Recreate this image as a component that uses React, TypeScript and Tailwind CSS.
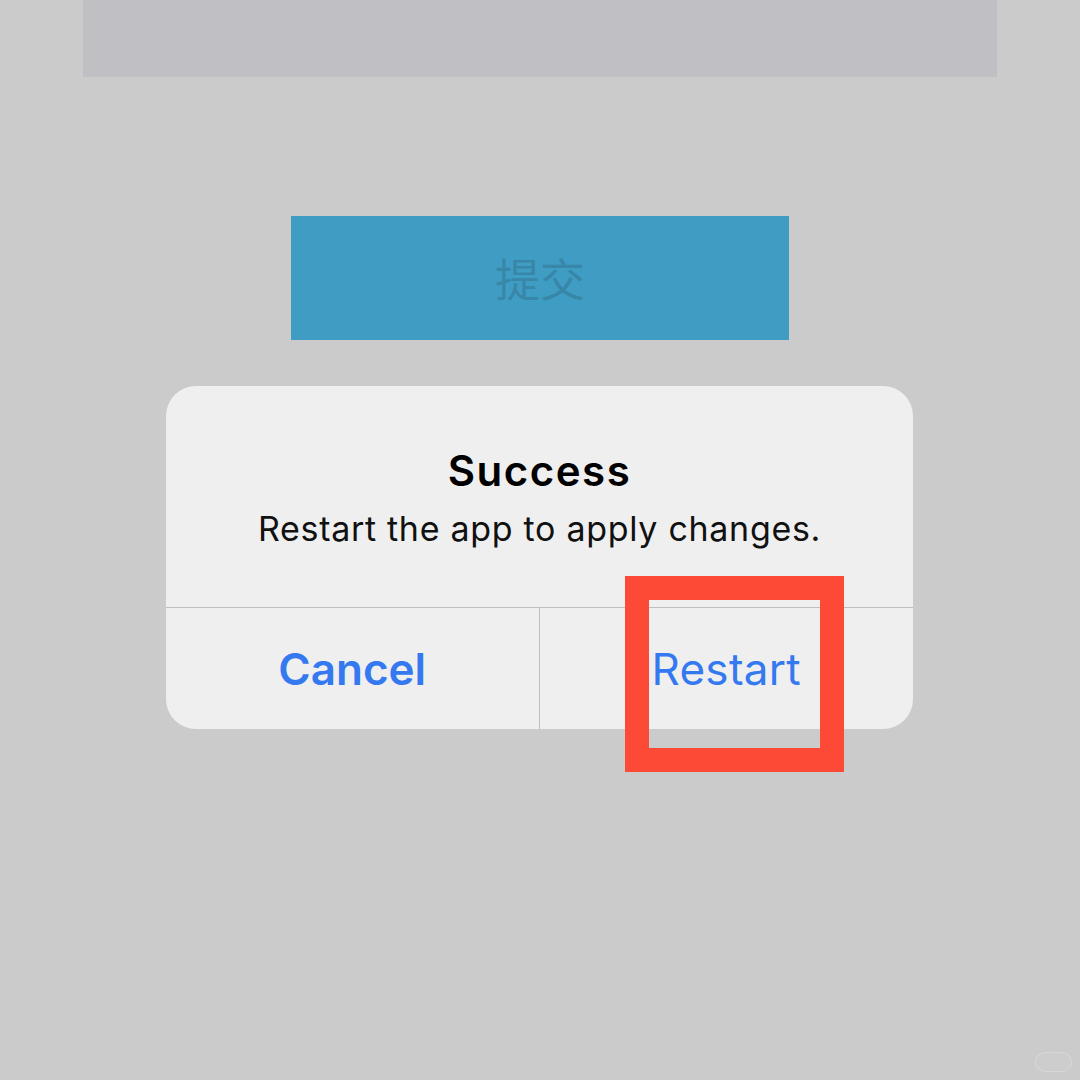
export default function App() {
  return (
    <div className="w-[1080px] h-[1080px] bg-[#cbcbcb] flex flex-col font-['Inter','Noto_Sans_CJK_SC',sans-serif] overflow-hidden relative">
      {/* 顶部灰条 */}
      <div className="ml-[83px] w-[914px] h-[77px] bg-[#c0bfc4]" />

      {/* 提交按钮 */}
      <div className="mt-[139px] ml-[291px] w-[498px] h-[124px] bg-[#3f9dc4] flex items-center justify-center">
        <span className="text-[45px] leading-none text-[#3886a8] font-['Noto_Sans_CJK_SC',sans-serif] pb-[2px]">提交</span>
      </div>

      {/* 弹窗 */}
      <div className="mt-[46px] ml-[166px] w-[747px] relative">
        <div className="w-full rounded-[30px] bg-[#efefef] flex flex-col overflow-hidden">
          <div className="h-[221px] pt-[60px] flex flex-col items-center">
            <div className="text-[42px] leading-[50px] font-semibold tracking-[1.5px] text-black">Success</div>
            <div className="mt-[13px] text-[34px] leading-[40px] tracking-[0.7px] text-[#111]">
              Restart the app to apply changes.
            </div>
          </div>
          <div className="h-px bg-[#bfbfbf]" />
          <div className="h-[121px] grid grid-cols-2">
            <button className="flex items-center justify-center text-[44px] font-semibold text-[#3479ef] border-r border-[#bfbfbf]">
              Cancel
            </button>
            <button className="flex items-center justify-center text-[44px] tracking-[0.3px] text-[#3479ef]">
              Restart
            </button>
          </div>
        </div>

        {/* 红框标注 */}
        <div className="absolute left-[459px] top-[190px] w-[219px] h-[196px] border-[24px] border-[#fd4a37]" />
      </div>

      {/* 水印 */}
      <div className="absolute right-[8px] bottom-[8px] w-[37px] h-[20px] rounded-full border border-white/20 bg-white/5" />
    </div>
  );
}
